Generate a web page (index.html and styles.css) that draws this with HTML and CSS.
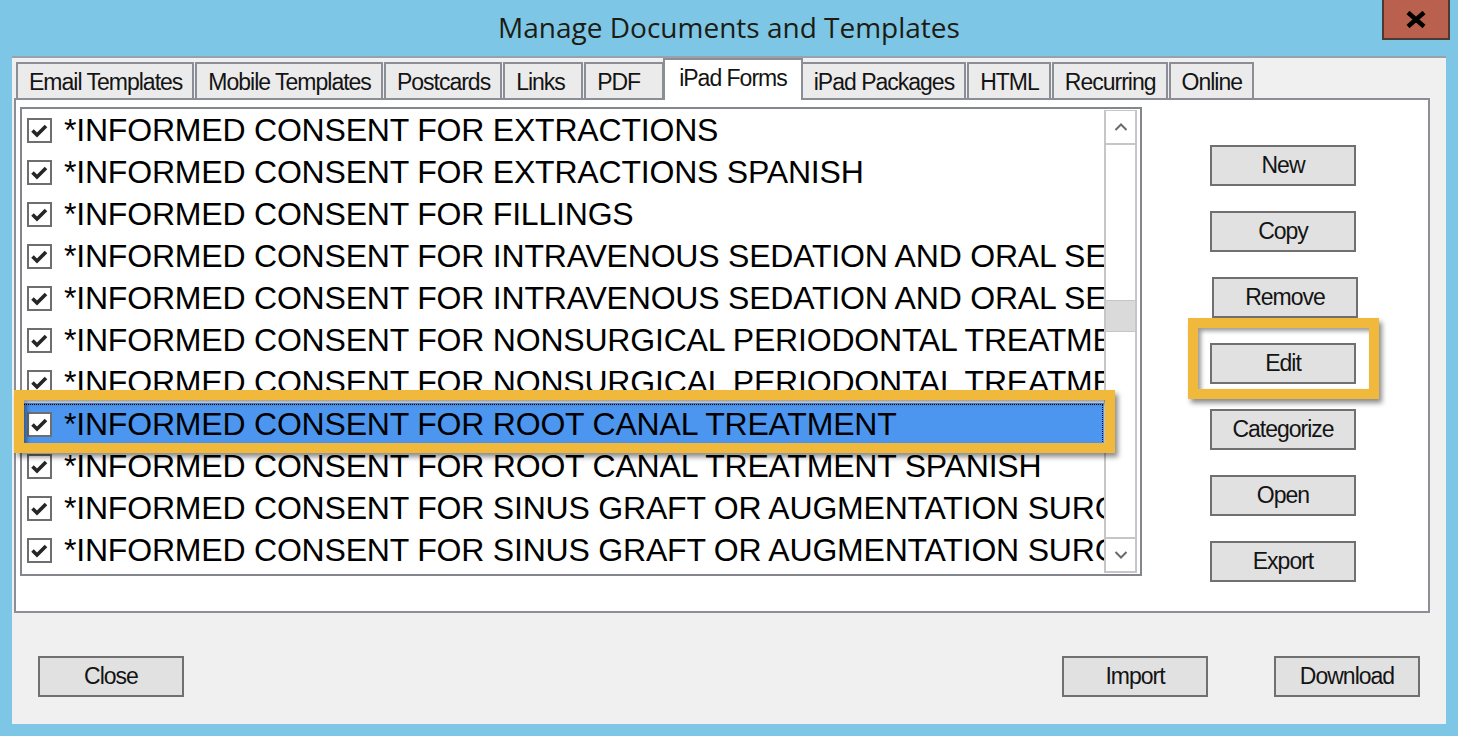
FILE: index.html
```html
<!DOCTYPE html>
<html lang="en">
<head>
    <meta charset="UTF-8">
    <title>Manage Documents and Templates</title>
    <link rel="stylesheet" href="styles.css">
</head>
<body>

    <div class="titlebar">
        <span></span>
        <h1 class="title">Manage Documents and Templates</h1>
        <button class="close-x">
            <svg width="20" height="17" viewBox="0 0 20 17"><path d="M2 1.5 L18 15.5 M18 1.5 L2 15.5" stroke="#000" stroke-width="4.5" fill="none"/></svg>
        </button>
    </div>

    <div class="dialog">
        <div class="tabs">
            <div class="tab">Email Templates</div>
            <div class="tab">Mobile Templates</div>
            <div class="tab">Postcards</div>
            <div class="tab">Links</div>
            <div class="tab">PDF</div>
            <div class="tab active">iPad Forms</div>
            <div class="tab">iPad Packages</div>
            <div class="tab">HTML</div>
            <div class="tab">Recurring</div>
            <div class="tab">Online</div>
        </div>

        <div class="tab-panel">
            <div class="listbox">
                <ul class="items" id="items"></ul>
                <div class="scrollbar">
                    <div class="sb-btn">
                        <svg width="14" height="8" viewBox="0 0 14 8"><path d="M1.5 7 L7 1.5 L12.5 7" stroke="#6a6a6a" stroke-width="2" fill="none"/></svg>
                    </div>
                    <div class="sb-track"><div class="sb-thumb"></div></div>
                    <div class="sb-btn down">
                        <svg width="14" height="8" viewBox="0 0 14 8"><path d="M1.5 1 L7 6.5 L12.5 1" stroke="#6a6a6a" stroke-width="2" fill="none"/></svg>
                    </div>
                </div>
            </div>

            <div class="side-buttons">
                <button class="btn">New</button>
                <button class="btn">Copy</button>
                <button class="btn nudge">Remove</button>
                <button class="btn">Edit</button>
                <button class="btn">Categorize</button>
                <button class="btn">Open</button>
                <button class="btn">Export</button>
            </div>
        </div>

        <div class="footer">
            <button class="btn">Close</button>
            <button class="btn push">Import</button>
            <button class="btn">Download</button>
        </div>
    </div>

    <div class="callout callout-row"></div>
    <div class="callout callout-edit"></div>

    <script>
        const forms = [
            "*INFORMED CONSENT FOR EXTRACTIONS",
            "*INFORMED CONSENT FOR EXTRACTIONS SPANISH",
            "*INFORMED CONSENT FOR FILLINGS",
            "*INFORMED CONSENT FOR INTRAVENOUS SEDATION AND ORAL SEDATION",
            "*INFORMED CONSENT FOR INTRAVENOUS SEDATION AND ORAL SEDATION SPANISH",
            "*INFORMED CONSENT FOR NONSURGICAL PERIODONTAL TREATMENT",
            "*INFORMED CONSENT FOR NONSURGICAL PERIODONTAL TREATMENT SPANISH",
            "*INFORMED CONSENT FOR ROOT CANAL TREATMENT",
            "*INFORMED CONSENT FOR ROOT CANAL TREATMENT SPANISH",
            "*INFORMED CONSENT FOR SINUS GRAFT OR AUGMENTATION SURGERY",
            "*INFORMED CONSENT FOR SINUS GRAFT OR AUGMENTATION SURGERY SPANISH"
        ];
        const selected = 7;

        const list = document.getElementById("items");
        forms.forEach((name, i) => {
            const row = document.createElement("li");
            row.classList.add("item");
            if (i === selected) row.classList.add("selected");
            row.innerHTML = `
                <span class="check"><svg width="21" height="21" viewBox="0 0 21 21"><path d="M3.5 10.5 L8 15 L17 6" stroke="#262626" stroke-width="3.6" fill="none"/></svg></span>
                <span class="label">${name}</span>
            `;
            list.appendChild(row);
        });
    </script>

</body>
</html>
```

FILE: styles.css
```css
body {
    margin: 0;
    background-color: #7ec6e5;
    font-family: "Liberation Sans", Arial, sans-serif;
    width: 1458px;
    height: 736px;
    overflow: hidden;
}
.titlebar {
    display: grid;
    grid-template-columns: 1fr auto 1fr;
    height: 56px;
}
.title {
    margin: 0;
    font-family: "Open Sans", "Noto Sans", sans-serif;
    font-weight: normal;
    font-size: 28px;
    line-height: 54px;
    color: #1c1c14;
}
.close-x {
    justify-self: end;
    align-self: start;
    margin-right: 8px;
    width: 68px;
    height: 40px;
    padding: 0;
    background: #b9604f;
    border: 2px solid #4b3934;
    border-top: none;
    display: flex;
    align-items: center;
    justify-content: center;
}
.dialog {
    margin: 0 12px;
    height: 668px;
    box-sizing: border-box;
    background: #f0f0f0;
    border-top: 2px solid #98a2aa;
    padding-left: 2px;
}
.tabs {
    display: flex;
    align-items: flex-end;
    height: 40px;
    padding-left: 2px;
}
.tab {
    height: 36px;
    min-width: 80px;
    box-sizing: border-box;
    padding: 0 10px 0 11px;
    margin-right: 1px;
    border: 2px solid #8b8e96;
    border-bottom: none;
    background: #ebebeb;
    font-size: 23px;
    letter-spacing: -1px;
    line-height: 36px;
    color: #141414;
    white-space: nowrap;
}
.tab.active {
    position: relative;
    z-index: 1;
    height: 42px;
    margin: 0 -2px -2px -2px;
    padding: 0 14px;
    background: #fff;
    line-height: 36px;
}
.tab-panel {
    display: flex;
    align-items: flex-start;
    width: 1416px;
    height: 515px;
    box-sizing: border-box;
    border: 2px solid #8b8e96;
    background: #fff;
    padding: 7px 4px;
}
.listbox {
    display: flex;
    width: 1122px;
    height: 469px;
    box-sizing: border-box;
    border: 2px solid #83868d;
}
.items {
    list-style: none;
    margin: 0;
    padding: 0;
    width: 1082px;
    overflow: hidden;
}
.item {
    display: flex;
    align-items: center;
    gap: 12px;
    height: 42px;
    padding-left: 5px;
    box-sizing: border-box;
    white-space: nowrap;
    font-size: 32px;
    letter-spacing: -0.2px;
    color: #000;
}
.item.selected {
    background: #4d96ef;
    outline: 1px dotted #000;
    outline-offset: -2px;
}
.check {
    flex: none;
    width: 25px;
    height: 25px;
    box-sizing: border-box;
    border: 2px solid #6e6e6e;
    background: #fff;
    display: flex;
}
.scrollbar {
    display: flex;
    flex-direction: column;
    width: 33px;
    margin: 1px 3px 1px 0;
    box-sizing: border-box;
    border: 2px solid #c6c6c6;
    border-top-width: 1px;
}
.sb-btn {
    height: 32px;
    flex: none;
    display: flex;
    align-items: center;
    justify-content: center;
    border-bottom: 2px solid #c6c6c6;
}
.sb-btn.down {
    border-bottom: none;
    border-top: 2px solid #c6c6c6;
}
.sb-track {
    flex: 1;
}
.sb-thumb {
    margin-top: 155px;
    height: 30px;
    background: #dadada;
    border-top: 1px solid #c6c6c6;
    border-bottom: 1px solid #c6c6c6;
}
.side-buttons {
    display: flex;
    flex-direction: column;
    gap: 25px;
    margin: 38px 0 0 68px;
}
.btn {
    width: 146px;
    height: 41px;
    padding: 0;
    box-sizing: border-box;
    border: 2px solid #707070;
    background: #e1e1e1;
    font-family: "Liberation Sans", Arial, sans-serif;
    font-size: 23px;
    letter-spacing: -1px;
    color: #141414;
}
.btn.nudge {
    margin-left: 2px;
}
.footer {
    display: flex;
    padding: 43px 26px 0 24px;
}
.btn.push {
    margin-left: auto;
    margin-right: 66px;
}
.callout {
    position: absolute;
    box-sizing: border-box;
    border: 10px solid #f1b93c;
    box-shadow: 3px 4px 5px rgba(0,0,0,0.45), inset 3px 3px 4px rgba(0,0,0,0.4);
}
.callout-row {
    left: 14px;
    top: 390px;
    width: 1101px;
    height: 63px;
}
.callout-edit {
    left: 1188px;
    top: 318px;
    width: 191px;
    height: 81px;
}
```
